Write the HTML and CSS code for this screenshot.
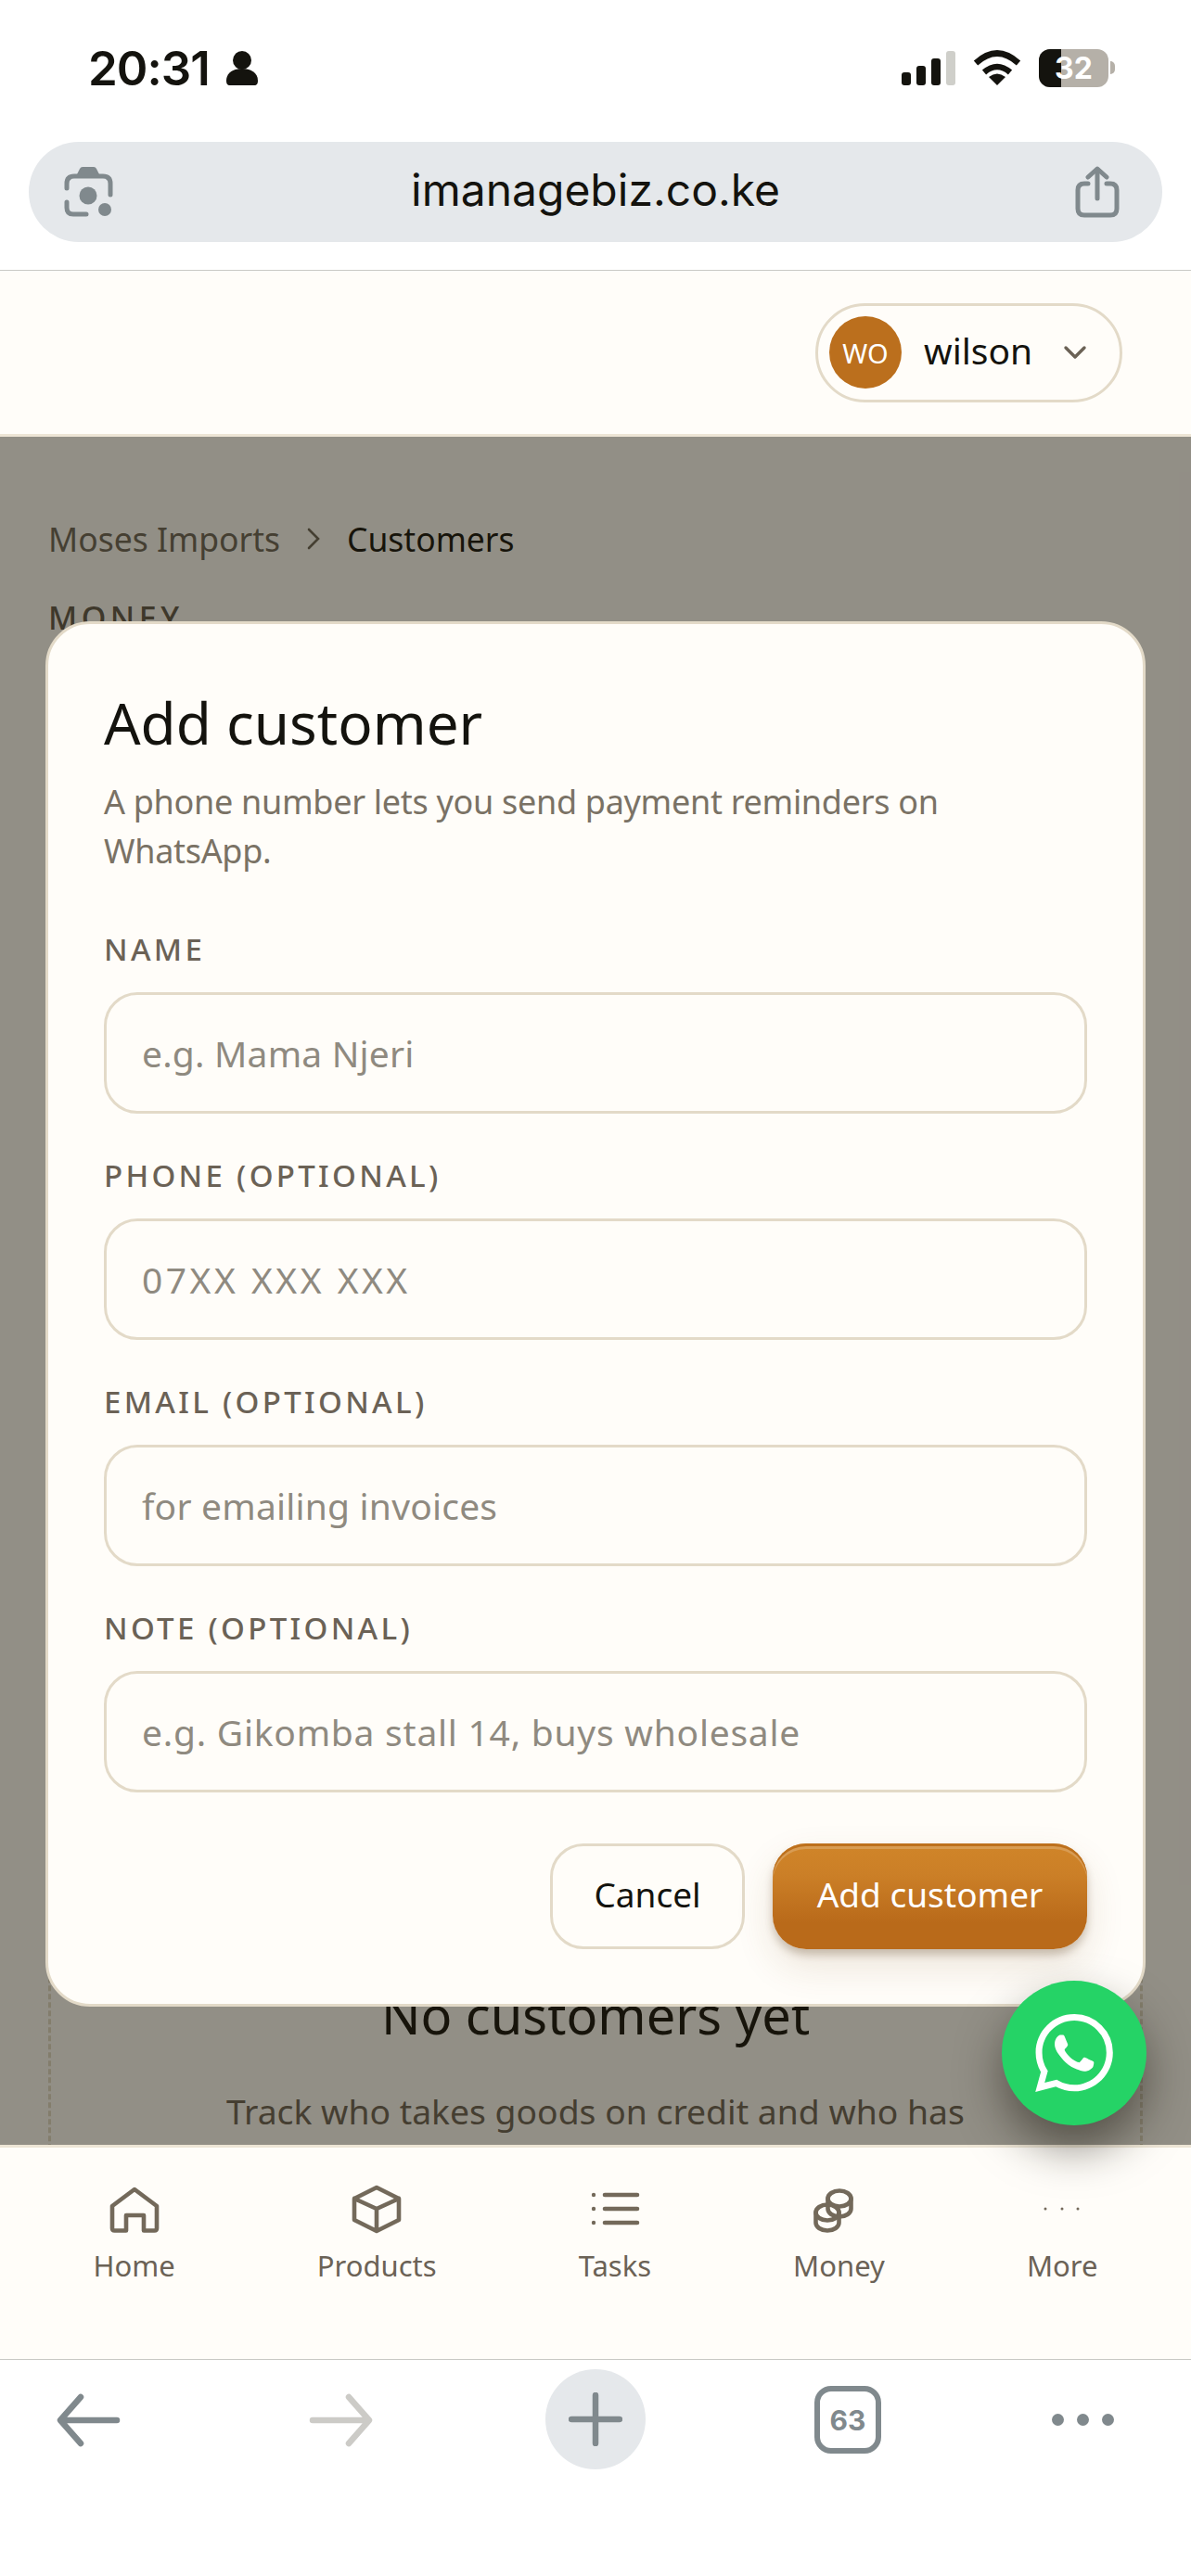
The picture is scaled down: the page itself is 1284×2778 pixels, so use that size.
FILE: index.html
```html
<!DOCTYPE html>
<html lang="en">
<head>
    <meta charset="UTF-8">
    <meta name="viewport" content="width=device-width, initial-scale=1.0">
    <title>Customers</title>
    <link rel="stylesheet" href="styles.css">
</head>
<body>
    <!-- browser top -->
    <div class="browser-top">
        <div class="status">
            <div class="status-left">
                <span class="time">20:31</span>
                <svg class="person" width="34" height="37" viewBox="0 0 34 37"><circle cx="17" cy="10" r="10" fill="#14130e"/><path d="M0 32c0-9 8-13 17-13s17 4 17 13c0 3-1 5-4 5H4c-3 0-4-2-4-5z" fill="#14130e"/></svg>
            </div>
            <div class="status-right">
                <div class="signal"><i class="b1"></i><i class="b2"></i><i class="b3"></i><i class="b4"></i></div>
                <svg class="wifi" width="52" height="38" viewBox="0 0 52 38"><g fill="none" stroke="#14130e" stroke-width="6.5"><path d="M3 14Q26 -7 49 14"/><path d="M12 24Q26 12 40 24"/></g><path d="M17 29Q26 22 35 29L26 38Z" fill="#14130e"/></svg>
                <div class="battery"><div class="battery-fill"></div><span>32</span></div>
                <div class="battery-nub"></div>
            </div>
        </div>
        <div class="urlbar">
            <svg width="54" height="54" viewBox="0 0 54 54"><path d="M15 8l3-6q1-2 3-2h12q2 0 3 2l3 6z" fill="#80898d"/><g fill="none" stroke="#80898d" stroke-width="5" stroke-linecap="round"><path d="M4 23V18q0-8 8-8H43q8 0 8 8V30"/><path d="M4 38V44q0 7 7 7H25"/></g><circle cx="27" cy="31" r="9.5" fill="#80898d"/><circle cx="45" cy="46" r="7" fill="#80898d"/></svg>
            <span class="url">imanagebiz.co.ke</span>
            <svg width="48" height="56" viewBox="0 0 48 56"><g fill="none" stroke="#80898d" stroke-width="5" stroke-linecap="round" stroke-linejoin="round"><path d="M14 19H10q-7 0-7 7V46q0 7 7 7H38q7 0 7-7V26q0-7-7-7H34"/><path d="M24 35V4"/><path d="M14 12L24 3L34 12"/></g></svg>
        </div>
    </div>

    <!-- app header -->
    <header class="app-header">
        <div class="user-pill">
            <span class="avatar">WO</span>
            <span class="user-name">wilson</span>
            <svg width="26" height="16" viewBox="0 0 26 16"><path d="M3 3l10 10L23 3" fill="none" stroke="#6b6256" stroke-width="3.4" stroke-linecap="round" stroke-linejoin="round"/></svg>
        </div>
    </header>

    <!-- page under the dialog -->
    <main class="content">
        <div class="crumbs">
            <span class="crumb-link">Moses Imports</span>
            <svg width="14" height="24" viewBox="0 0 14 24"><path d="M2 2l10 10L2 22" fill="none" stroke="#6b6559" stroke-width="2.6" stroke-linecap="round"/></svg>
            <span class="crumb-current">Customers</span>
        </div>
        <div class="section-label">MONEY</div>
        <div class="empty-card">
            <h2>No customers yet</h2>
            <p>Track who takes goods on credit and who has</p>
        </div>

        <!-- dialog -->
        <div class="overlay">
            <div class="modal">
                <h1>Add customer</h1>
                <p class="modal-sub">A phone number lets you send payment reminders on WhatsApp.</p>
                <form class="fields">
                    <div class="field">
                        <label for="name">NAME</label>
                        <input type="text" id="name" placeholder="e.g. Mama Njeri">
                    </div>
                    <div class="field">
                        <label for="phone">PHONE (OPTIONAL)</label>
                        <input type="text" id="phone" class="input-phone" placeholder="07XX XXX XXX">
                    </div>
                    <div class="field">
                        <label for="email">EMAIL (OPTIONAL)</label>
                        <input type="text" id="email" placeholder="for emailing invoices">
                    </div>
                    <div class="field">
                        <label for="note">NOTE (OPTIONAL)</label>
                        <input type="text" id="note" class="input-note" placeholder="e.g. Gikomba stall 14, buys wholesale">
                    </div>
                    <div class="actions">
                        <button type="button" class="btn-cancel">Cancel</button>
                        <button type="button" class="btn-add">Add customer</button>
                    </div>
                </form>
            </div>
        </div>
    </main>

    <!-- bottom nav -->
    <nav class="tabs">
        <div class="tab">
            <svg width="66" height="66" viewBox="0 0 66 66"><path class="ico" d="M9 29L33 11L57 29V53q0 2.500-2.500 2.500H43V39H24V55.500H11.500Q9 55.500 9 53Z"/></svg>
            <span>Home</span>
        </div>
        <div class="tab">
            <svg width="66" height="66" viewBox="0 0 66 66"><path class="ico" d="M33 9L57 21V44L33 56L9 44V21ZM9 21L33 32L57 21M33 32V56"/></svg>
            <span>Products</span>
        </div>
        <div class="tab">
            <svg width="66" height="66" viewBox="0 0 66 66"><path class="ico" d="M22 17H57M22 32H57M22 47H57"/><circle cx="10" cy="17" r="2.200" fill="#73695a"/><circle cx="10" cy="32" r="2.200" fill="#73695a"/><circle cx="10" cy="47" r="2.200" fill="#73695a"/></svg>
            <span>Tasks</span>
        </div>
        <div class="tab">
            <svg width="66" height="66" viewBox="0 0 66 66"><g class="ico"><ellipse cx="34" cy="21" rx="12.500" ry="8.500"/><path d="M21.500 21V32a12.500 8.500 0 0 0 25 0V21"/><ellipse cx="21" cy="36" rx="12.500" ry="8.500"/><path d="M8.500 36V47a12.500 8.500 0 0 0 25 0V36"/></g></svg>
            <span>Money</span>
        </div>
        <div class="tab">
            <svg width="66" height="66" viewBox="0 0 66 66"><g fill="#73695a"><circle cx="15" cy="32" r="1.500"/><circle cx="33" cy="32" r="1.500"/><circle cx="50" cy="32" r="1.500"/></g></svg>
            <span>More</span>
        </div>
    </nav>

    <!-- whatsapp button -->
    <a class="fab" href="#">
        <svg width="84" height="84" viewBox="0 0 24 24"><path fill="#fff" d="M17.472 14.382c-.297-.149-1.758-.867-2.03-.967-.273-.099-.471-.148-.67.15-.197.297-.767.966-.94 1.164-.173.199-.347.223-.644.075-.297-.15-1.255-.463-2.39-1.475-.883-.788-1.48-1.761-1.653-2.059-.173-.297-.018-.458.13-.606.134-.133.298-.347.446-.52.149-.174.198-.298.298-.497.099-.198.05-.371-.025-.52-.075-.149-.669-1.612-.916-2.207-.242-.579-.487-.5-.669-.51-.173-.008-.371-.01-.57-.01-.198 0-.52.074-.792.372-.272.297-1.04 1.016-1.04 2.479 0 1.462 1.065 2.875 1.213 3.074.149.198 2.096 3.2 5.077 4.487.709.306 1.262.489 1.694.625.712.227 1.36.195 1.871.118.571-.085 1.758-.719 2.006-1.413.248-.694.248-1.289.173-1.413-.074-.124-.272-.198-.57-.347m-5.421 7.403h-.004a9.87 9.87 0 01-5.031-1.378l-.361-.214-3.741.982.998-3.648-.235-.374a9.86 9.86 0 01-1.51-5.26c.001-5.45 4.436-9.884 9.888-9.884 2.64 0 5.122 1.03 6.988 2.898a9.825 9.825 0 012.893 6.994c-.003 5.45-4.437 9.884-9.885 9.884m8.413-18.297A11.815 11.815 0 0012.05 0C5.495 0 .16 5.335.157 11.892c0 2.096.547 4.142 1.588 5.945L.057 24l6.305-1.654a11.882 11.882 0 005.683 1.448h.005c6.554 0 11.89-5.335 11.893-11.893a11.821 11.821 0 00-3.48-8.413z"/></svg>
    </a>

    <!-- browser bottom -->
    <div class="browser-bottom">
        <svg width="70" height="58" viewBox="0 0 70 58"><path d="M66 29H6M27 4L5 29L27 54" fill="none" stroke="#80898d" stroke-width="6.500" stroke-linecap="round" stroke-linejoin="round"/></svg>
        <svg width="70" height="58" viewBox="0 0 70 58"><path d="M4 29H64M43 4L65 29L43 54" fill="none" stroke="#cccbc7" stroke-width="6.500" stroke-linecap="round" stroke-linejoin="round"/></svg>
        <div class="new-tab"><svg width="58" height="58" viewBox="0 0 58 58"><path d="M29 3V55M3 29H55" fill="none" stroke="#80898d" stroke-width="6.500" stroke-linecap="round"/></svg></div>
        <div class="tab-count">63</div>
        <div class="more-dots"><i></i><i></i><i></i></div>
    </div>
</body>
</html>
```

FILE: styles.css
```css
/* page */
body, html {
    margin: 0;
    padding: 0;
    width: 1284px;
    height: 2778px;
    overflow: hidden;
    background: #fff;
    font-family: "Noto Sans", Arial, sans-serif;
}

body {
    position: relative;
    display: flex;
    flex-direction: column;
}

/* browser top */
.browser-top {
    height: 291px;
    flex: none;
    background: #fff;
    border-bottom: 1px solid #c9c9c5;
    padding: 0 31px;
}

.status {
    height: 153px;
    display: flex;
    justify-content: space-between;
    margin: 0 0 0 64px;
    padding-right: 51px;
    color: #14130e;
}

.status-left {
    display: flex;
    align-items: center;
    height: 146px;
    gap: 18px;
}

.time {
    font-family: Inter, sans-serif;
    font-size: 51px;
    font-weight: 600;
    letter-spacing: -1px;
}

.person {
    margin-top: 1px;
}

.status-right {
    display: flex;
    align-items: center;
    height: 146px;
}

.signal {
    display: flex;
    align-items: flex-end;
    gap: 6px;
    height: 37px;
    margin-right: 19px;
}

.signal i {
    width: 10px;
    border-radius: 3px;
    background: #14130e;
}

.signal .b1 { height: 14px; }
.signal .b2 { height: 21px; }
.signal .b3 { height: 29px; }
.signal .b4 { height: 37px; background: #cfcfca; }

.battery {
    position: relative;
    width: 75px;
    height: 41px;
    margin-left: 19px;
    border-radius: 12px;
    overflow: hidden;
    background: #b5b0a8;
    display: flex;
    align-items: center;
    justify-content: center;
}

.battery-fill {
    position: absolute;
    left: 0;
    top: 0;
    bottom: 0;
    width: 24px;
    background: #14130e;
}

.battery span {
    position: relative;
    color: #fff;
    font-family: Inter, sans-serif;
    font-size: 32px;
    font-weight: 700;
}

.battery-nub {
    width: 5px;
    height: 14px;
    margin-left: 2px;
    border-radius: 0 7px 7px 0;
    background: #b5b0a8;
}

.urlbar {
    height: 108px;
    border-radius: 54px;
    background: #e5e8eb;
    display: flex;
    align-items: center;
    justify-content: space-between;
    padding: 0 46px 0 37px;
}

.url {
    font-family: Inter, sans-serif;
    font-size: 48px;
    margin: 0 0 5px 3px;
    color: #14130e;
}

/* app header */
.app-header {
    height: 176px;
    flex: none;
    background: #fffdf9;
    border-bottom: 3px solid #ede5d5;
    display: flex;
    justify-content: flex-end;
    align-items: center;
    padding-right: 74px;
}

.user-pill {
    display: flex;
    align-items: center;
    box-sizing: border-box;
    width: 331px;
    height: 107px;
    padding: 0 0 0 12px;
    border: 3px solid #e3dac8;
    border-radius: 54px;
}

.avatar {
    width: 78px;
    height: 78px;
    border-radius: 50%;
    background: #bb6f1d;
    color: #fff;
    font-size: 29px;
    display: flex;
    align-items: center;
    justify-content: center;
}

.user-name {
    margin: 0 33px 6px 24px;
    font-size: 39px;
    color: #14130e;
}

/* page under dialog */
.content {
    position: relative;
    flex: 1;
    min-height: 0;
    overflow: hidden;
    background: #fffdf9;
    padding: 0 52px;
}

.crumbs {
    display: flex;
    align-items: center;
    gap: 29px;
    margin-top: 85px;
    font-size: 35.500px;
    line-height: 50px;
}

.crumb-link {
    color: #6b6559;
}

.crumb-current {
    color: #14130e;
}

.section-label {
    margin-top: 37px;
    font-size: 34px;
    line-height: 46px;
    letter-spacing: 4.500px;
    font-weight: 500;
    color: #5f574b;
}

.empty-card {
    margin-top: 1392px;
    height: 700px;
    border: 3px dashed #e3dac8;
    border-radius: 30px;
    text-align: center;
}

.empty-card h2 {
    margin: 0;
    padding-top: 50px;
    font-size: 56px;
    font-weight: 400;
    color: #14130e;
}

.empty-card p {
    margin: 41px 0 0;
    font-size: 37.300px;
    color: #6b6256;
}

/* overlay */
.overlay {
    position: absolute;
    inset: 0;
    background: rgba(28, 22, 8, 0.48);
    padding: 199px 49px 0;
}

.modal {
    box-sizing: border-box;
    height: 1494px;
    padding: 68px 60px 0;
    background: #fffdf9;
    border: 3px solid #e3dac8;
    border-radius: 48px;
    color: #14130e;
}

.modal h1 {
    margin: 0;
    font-size: 62px;
    line-height: 76px;
    font-weight: 400;
}

.modal-sub {
    margin: 21px 0 0;
    font-size: 36px;
    line-height: 53px;
    letter-spacing: -0.3px;
    color: #7a7265;
}

.fields {
    margin-top: 57px;
    display: flex;
    flex-direction: column;
    gap: 44px;
}

.field label {
    display: block;
    height: 46px;
    margin-bottom: 23px;
    font-size: 33px;
    line-height: 46px;
    letter-spacing: 3.300px;
    font-weight: 500;
    color: #6b6256;
}

.field input {
    display: block;
    box-sizing: border-box;
    width: 100%;
    height: 131px;
    padding: 0 38px;
    background: #fffdf9;
    border: 3px solid #e3dac8;
    border-radius: 36px;
    font-family: inherit;
    font-size: 39px;
    letter-spacing: 0.2px;
}

.field .input-phone {
    letter-spacing: 3.500px;
}

.field .input-note {
    letter-spacing: 0.750px;
}

.field input::placeholder {
    color: #8f8a80;
    opacity: 1;
}

.actions {
    display: flex;
    justify-content: flex-end;
    gap: 30px;
    margin-top: 11px;
}

.actions button {
    height: 114px;
    padding: 0 0 5px;
    border-radius: 36px;
    font-family: inherit;
    font-size: 37px;
}

.btn-cancel {
    width: 210px;
    background: #fffdf9;
    border: 3px solid #e3dac8;
    color: #14130e;
}

.btn-add {
    width: 339px;
    border: none;
    color: #fff;
    background: linear-gradient(180deg, #d08529 0%, #cb7f27 30%, #b96a1a 75%, #b96a1a 100%);
    box-shadow: inset 0 3px 0 #bd701c, inset 0 6px 0 rgba(255, 255, 255, 0.2), 0 6px 8px rgba(80, 50, 20, 0.25), 0 18px 40px rgba(120, 80, 30, 0.14);
}

/* bottom nav */
.tabs {
    height: 228px;
    flex: none;
    background: #fffdf9;
    border-top: 3px solid #ede5d5;
    border-bottom: 1px solid #c9c9c5;
    display: flex;
    justify-content: space-around;
    align-items: flex-start;
    padding: 0 24px;
}

.tab {
    display: flex;
    flex-direction: column;
    align-items: center;
    padding-top: 34px;
    color: #6b6256;
    font-size: 31px;
    line-height: 44px;
}

.tab svg {
    margin-bottom: 5px;
}

.ico, .ico * {
    fill: none;
    stroke: #73695a;
    stroke-width: 4.6;
    stroke-linecap: round;
    stroke-linejoin: round;
}

/* whatsapp */
.fab {
    position: absolute;
    left: 1080px;
    top: 2136px;
    width: 156px;
    height: 156px;
    border-radius: 50%;
    background: #25d366;
    display: flex;
    align-items: center;
    justify-content: center;
    box-shadow: 0 24px 48px rgba(30, 25, 15, 0.5);
}

/* browser bottom */
.browser-bottom {
    position: relative;
    flex: none;
    height: 233px;
    background: #fff;
}

.browser-bottom > svg {
    position: absolute;
    top: 36px;
}

.browser-bottom > svg:nth-child(1) { left: 60px; }
.browser-bottom > svg:nth-child(2) { left: 333px; }

.new-tab {
    position: absolute;
    left: 588px;
    top: 10px;
    width: 108px;
    height: 108px;
    border-radius: 50%;
    background: #e5e8eb;
    display: flex;
    align-items: center;
    justify-content: center;
}

.tab-count {
    position: absolute;
    left: 878px;
    top: 28px;
    box-sizing: border-box;
    width: 72px;
    height: 73px;
    border: 6px solid #80898d;
    border-radius: 18px;
    color: #80898d;
    font-family: Inter, sans-serif;
    font-weight: 700;
    font-size: 30px;
    display: flex;
    align-items: center;
    justify-content: center;
}

.more-dots {
    position: absolute;
    left: 1134px;
    top: 58px;
    display: flex;
    gap: 14px;
}

.more-dots i {
    width: 13px;
    height: 13px;
    border-radius: 50%;
    background: #80898d;
}
```
